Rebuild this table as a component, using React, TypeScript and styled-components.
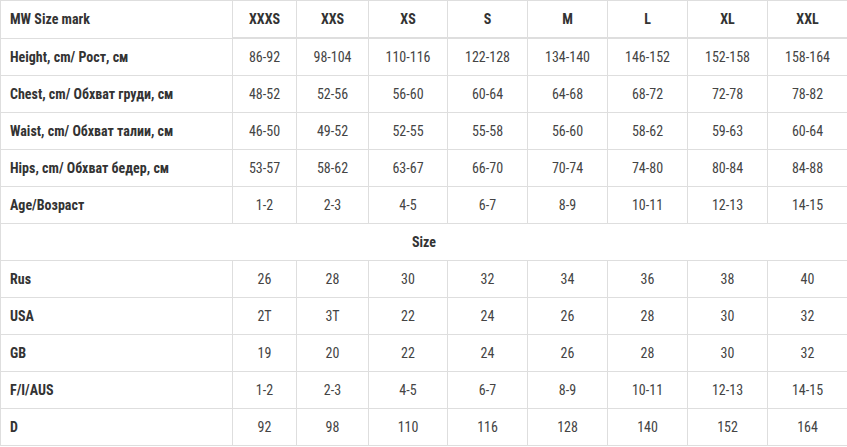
import styled, { createGlobalStyle } from 'styled-components';

const GlobalStyle = createGlobalStyle`
  body {
    margin: 0;
    background: #fff;
    font-family: 'Roboto Condensed', 'Liberation Sans Narrow', Roboto, sans-serif;
  }
`;

const sizes = ['XXXS', 'XXS', 'XS', 'S', 'M', 'L', 'XL', 'XXL'];
const widths = [232, 64, 72, 79, 80, 80, 80, 80, 80];

const measures: [string, string[]][] = [
  ['Height, cm/ Рост, см', ['86-92', '98-104', '110-116', '122-128', '134-140', '146-152', '152-158', '158-164']],
  ['Chest, cm/ Обхват груди, см', ['48-52', '52-56', '56-60', '60-64', '64-68', '68-72', '72-78', '78-82']],
  ['Waist, cm/ Обхват талии, см', ['46-50', '49-52', '52-55', '55-58', '56-60', '58-62', '59-63', '60-64']],
  ['Hips, cm/ Обхват бедер, см', ['53-57', '58-62', '63-67', '66-70', '70-74', '74-80', '80-84', '84-88']],
  ['Age/Возраст', ['1-2', '2-3', '4-5', '6-7', '8-9', '10-11', '12-13', '14-15']],
];

const conversions: [string, string[]][] = [
  ['Rus', ['26', '28', '30', '32', '34', '36', '38', '40']],
  ['USA', ['2T', '3T', '22', '24', '26', '28', '30', '32']],
  ['GB', ['19', '20', '22', '24', '26', '28', '30', '32']],
  ['F/I/AUS', ['1-2', '2-3', '4-5', '6-7', '8-9', '10-11', '12-13', '14-15']],
  ['D', ['92', '98', '110', '116', '128', '140', '152', '164']],
];

const Row = ({ label, values }: { label: string; values: string[] }) => (
  <tr>
    <Label>{label}</Label>
    {values.map((v, i) => (
      <Value key={i}>{v}</Value>
    ))}
  </tr>
);

const App = () => {
  return (
    <>
      <GlobalStyle />
      <Table>
        <colgroup>
          {widths.map((w, i) => (
            <col key={i} style={{ width: w }} />
          ))}
        </colgroup>
        <thead>
          <HeadRow>
            <Label>MW Size mark</Label>
            {sizes.map((s) => (
              <HeadCell key={s}>{s}</HeadCell>
            ))}
          </HeadRow>
        </thead>
        <tbody>
          {measures.map(([label, values]) => (
            <Row key={label} label={label} values={values} />
          ))}
          <tr>
            <SpanCell colSpan={9}>Size</SpanCell>
          </tr>
          {conversions.map(([label, values]) => (
            <Row key={label} label={label} values={values} />
          ))}
        </tbody>
      </Table>
    </>
  );
};

export default App;

const Table = styled.table`
  width: 847px;
  table-layout: fixed;
  border-collapse: collapse;
  font-size: 14px;
  line-height: 20px;
  td,
  th {
    border: 1px solid #dedede;
    height: 36px;
    padding: 0 8px;
  }
  tbody tr:first-child td {
    border-top: 2px solid #dedede;
  }
`;

const HeadRow = styled.tr`
  th {
    height: 36px;
  }
`;

const Label = styled.th`
  text-align: left;
  font-weight: 700;
  color: #333;
  padding-left: 9px !important;
`;

const HeadCell = styled.th`
  text-align: center;
  font-weight: 700;
  color: #333;
`;

const Value = styled.td`
  text-align: center;
  font-weight: 400;
  color: #444;
`;

const SpanCell = styled.td`
  text-align: center;
  font-weight: 700;
  color: #333;
`;
